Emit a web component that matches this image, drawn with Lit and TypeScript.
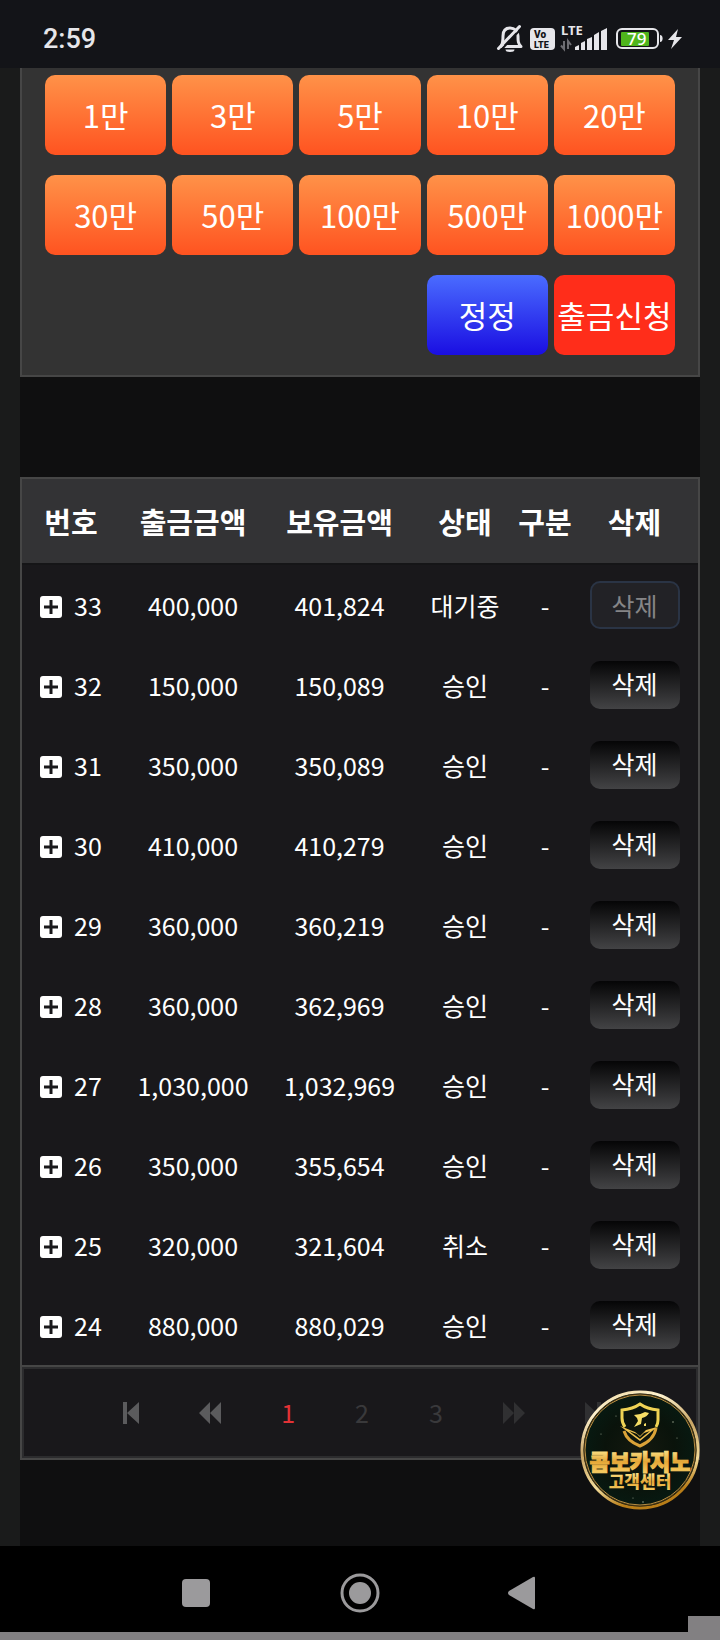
import {LitElement, html, svg, css} from 'lit'
import {customElement, property} from 'lit/decorators.js'
import {classMap} from 'lit/directives/class-map.js'

interface Withdrawal {
  no: number
  amount: string
  balance: string
  status: string
  pending?: boolean
}

const AMOUNTS = ['1만', '3만', '5만', '10만', '20만', '30만', '50만', '100만', '500만', '1000만']

const ROWS: Withdrawal[] = [
  {no: 33, amount: '400,000', balance: '401,824', status: '대기중', pending: true},
  {no: 32, amount: '150,000', balance: '150,089', status: '승인'},
  {no: 31, amount: '350,000', balance: '350,089', status: '승인'},
  {no: 30, amount: '410,000', balance: '410,279', status: '승인'},
  {no: 29, amount: '360,000', balance: '360,219', status: '승인'},
  {no: 28, amount: '360,000', balance: '362,969', status: '승인'},
  {no: 27, amount: '1,030,000', balance: '1,032,969', status: '승인'},
  {no: 26, amount: '350,000', balance: '355,654', status: '승인'},
  {no: 25, amount: '320,000', balance: '321,604', status: '취소'},
  {no: 24, amount: '880,000', balance: '880,029', status: '승인'},
]

@customElement('status-bar')
export class StatusBar extends LitElement {
  static styles = css`
    :host {
      display: flex;
      align-items: center;
      justify-content: space-between;
      height: 68px;
      padding: 10px 38px 0 43px;
      box-sizing: border-box;
      background: #131418;
      color: #e6e6ea;
      font-family: Roboto, "Noto Sans", sans-serif;
    }
    time {
      font-size: 27px;
      line-height: 32px;
      font-weight: 500;
    }
    .icons {
      display: flex;
      gap: 4px;
    }
    svg {
      display: block;
      height: 40px;
    }
    text {
      font-family: "Noto Sans", sans-serif;
      font-weight: 700;
    }
    .volte {
      font-family: Roboto, sans-serif;
      font-weight: 900;
    }
    .level {
      font-weight: 500;
    }
  `

  render() {
    return html`
      <time>2:59</time>
      <div class="icons">
        <svg width="30" viewBox="0 -5 30 40" fill="none" stroke="#e6e6ea" stroke-width="3">
          <path d="M5 22.500H25C22 19.500 22 17 22 12C22 7 18.500 4 14 4C9.500 4 7 7 7 12C7 17 7 19.500 5 22.500Z" stroke-linejoin="round"/>
          <path d="M5 26L26 4" stroke="#131418" stroke-width="2"/>
          <path d="M2.500 24.500L23.500 2.500" stroke-linecap="round"/>
          <path d="M9.500 25.500H18.500A4.500 2.500 0 0 1 9.500 25.500Z" fill="#e6e6ea" stroke="none"/>
        </svg>
        <svg width="26" viewBox="0 -5 26 40">
          <rect x="0" y="4" width="25" height="22" rx="4" fill="#e6e6ea"/>
          <text class="volte" x="4" y="14" font-size="10" fill="#131418">Vo</text>
          <text class="volte" x="4" y="24" font-size="9" fill="#131418">LTE</text>
        </svg>
        <svg width="50" viewBox="0 -5 50 40" fill="#e6e6ea">
          <text x="1" y="11" font-size="13">LTE</text>
          <path d="M15 26V23L19 21V26ZM21 26V19L25 17V26ZM27 26V15L32 13V26ZM34 26V11L39 8V26ZM41 26V7L47 4V26Z"/>
          <path d="M4 17V25L1 21.500M8 25V17L11 21" fill="none" stroke="#6d6d72" stroke-width="2"/>
        </svg>
        <svg width="50" viewBox="0 -5 50 40">
          <rect x="3" y="5" width="41" height="19" rx="5" fill="none" stroke="#e6e6ea" stroke-width="2"/>
          <rect x="7" y="8" width="28" height="14" rx="1" fill="#4fb51c"/>
          <path d="M46 11C49.500 11 49.500 18 46 18Z" fill="#e6e6ea"/>
          <text class="level" x="13" y="21" font-size="17" fill="#fff">79</text>
        </svg>
        <svg width="14" viewBox="0 -5 14 40">
          <path d="M10 5L0 16H6L3 25L14 13H8Z" fill="#e6e6ea"/>
        </svg>
      </div>
    `
  }
}

@customElement('amount-panel')
export class AmountPanel extends LitElement {
  static styles = css`
    :host {
      display: grid;
      grid-template-columns: repeat(5, 1fr);
      gap: 20px 6px;
      padding: 7px 23px 20px;
      background: #333;
      border: 2px solid #464646;
      border-top: 0;
    }
    button {
      height: 80px;
      padding: 0;
      border: 0;
      border-radius: 10px;
      background: linear-gradient(#ff9248, #ff5320);
      color: #fff;
      cursor: pointer;
      font: inherit;
      font-size: 31px;
      line-height: 40px;
      white-space: nowrap;
    }
    .reset {
      grid-column: 4;
      background: linear-gradient(#4a6cff, #1a0ee2);
    }
    .submit {
      background: #ff2d1a;
    }
  `

  render() {
    return html`
      ${AMOUNTS.map(amount => html`<button type="button">${amount}</button>`)}
      <button type="button" class="reset">정정</button>
      <button type="button" class="submit">출금신청</button>
    `
  }
}

@customElement('withdrawal-table')
export class WithdrawalTable extends LitElement {
  static styles = css`
    :host {
      display: block;
      border: 2px solid #464646;
      border-bottom: 0;
      background: #19181b;
    }
    table {
      width: 100%;
      table-layout: fixed;
      border-collapse: separate;
      border-spacing: 0;
      color: #fff;
      font-size: 25px;
      line-height: 36px;
      text-align: center;
    }
    .col-no { width: 98px; }
    .col-amount { width: 146px; }
    .col-balance { width: 147px; }
    .col-status { width: 104px; }
    .col-kind { width: 56px; }
    .col-delete { width: 125px; }
    th, td {
      padding: 0;
      white-space: nowrap;
    }
    th {
      height: 84px;
      background: #333335;
      border-bottom: 2px solid #151517;
      font-size: 29px;
      font-weight: 700;
    }
    td {
      height: 80px;
    }
    th:last-child, td:last-child {
      padding-right: 2px;
    }
    .no {
      display: flex;
      align-items: center;
      justify-content: center;
      gap: 12px;
    }
    button {
      padding: 0;
      border: 0;
      background: none;
      color: #fff;
      cursor: pointer;
      font: inherit;
    }
    .expand {
      padding-top: 3px;
    }
    svg {
      display: block;
    }
    .delete {
      width: 90px;
      height: 48px;
      padding-bottom: 4px;
      border-radius: 10px;
      background: linear-gradient(#050506, #434345);
      vertical-align: middle;
    }
    .delete.pending {
      padding-bottom: 0;
      border: 2px solid #2a3445;
      background: #222226;
      color: #858587;
      cursor: default;
    }
  `

  @property({attribute: false}) rows: Withdrawal[] = []

  _row(row: Withdrawal) {
    return html`
      <tr>
        <td>
          <div class="no">
            <button type="button" class="expand" aria-label="펼치기">
              <svg width="22" height="22" viewBox="0 0 22 22">
                <rect width="22" height="22" rx="3" fill="#fff"/>
                <path d="M11 4V18M4 11H18" stroke="#19181b" stroke-width="3"/>
              </svg>
            </button>
            <span>${row.no}</span>
          </div>
        </td>
        <td>${row.amount}</td>
        <td>${row.balance}</td>
        <td>${row.status}</td>
        <td>-</td>
        <td>
          <button type="button" class=${classMap({delete: true, pending: !!row.pending})} ?disabled=${row.pending}>삭제</button>
        </td>
      </tr>
    `
  }

  render() {
    return html`
      <table>
        <colgroup>
          <col class="col-no"><col class="col-amount"><col class="col-balance">
          <col class="col-status"><col class="col-kind"><col class="col-delete">
        </colgroup>
        <thead>
          <tr>
            <th>번호</th><th>출금금액</th><th>보유금액</th><th>상태</th><th>구분</th><th>삭제</th>
          </tr>
        </thead>
        <tbody>${this.rows.map(row => this._row(row))}</tbody>
      </table>
    `
  }
}

const first = svg`<path d="M0 0H4V22H0ZM4 11L16 0V22Z"/>`
const rewind = svg`<path d="M0 11L11 0V22ZM11 11L22 0V22Z"/>`
const forward = svg`<path d="M0 0L11 11L0 22ZM11 0L22 11L11 22Z"/>`
const last = svg`<path d="M0 0L12 11L0 22ZM12 0H16V22H12Z"/>`

@customElement('page-nav')
export class PageNav extends LitElement {
  static styles = css`
    :host {
      display: block;
      border: 2px solid #464646;
      background: #19181b;
    }
    nav {
      display: flex;
      align-items: center;
      justify-content: center;
      height: 87px;
      padding-left: 4px;
      border: 2px solid #2c2c2e;
    }
    button {
      padding: 0 30px;
      border: 0;
      background: none;
      color: #5b5b5d;
      cursor: pointer;
      font: inherit;
      font-size: 25px;
      line-height: 36px;
    }
    button:disabled {
      color: #303032;
    }
    .page {
      padding-bottom: 2px;
      color: #39393b;
    }
    .current {
      color: #e23236;
    }
    svg {
      display: block;
      fill: currentColor;
    }
  `

  _icon(label: string, width: number, shape: unknown, disabled = false) {
    return html`
      <button type="button" aria-label=${label} ?disabled=${disabled}>
        <svg width=${width} height="22" viewBox="0 0 ${width} 22">${shape}</svg>
      </button>
    `
  }

  render() {
    return html`
      <nav aria-label="페이지">
        ${this._icon('처음', 16, first)}
        ${this._icon('이전', 22, rewind)}
        ${[1, 2, 3].map(page => html`
          <button type="button" class=${classMap({page: true, current: page === 1})}>${page}</button>
        `)}
        ${this._icon('다음', 22, forward, true)}
        ${this._icon('마지막', 16, last, true)}
      </nav>
    `
  }
}

@customElement('support-badge')
export class SupportBadge extends LitElement {
  static styles = css`
    :host {
      display: block;
    }
    a, svg {
      display: block;
    }
    text {
      font-family: "Noto Sans CJK KR", sans-serif;
      font-weight: 900;
      text-anchor: middle;
    }
  `

  render() {
    return html`
      <a href="#support">
        <svg width="120" height="120" viewBox="0 0 120 120">
          <defs>
            <linearGradient id="ring" x1="0" y1="0" x2="0.300" y2="1">
              <stop offset="0" stop-color="#e9cf95"/>
              <stop offset="0.200" stop-color="#fff3cf"/>
              <stop offset="0.500" stop-color="#c9a565"/>
              <stop offset="0.800" stop-color="#f3dc9a"/>
              <stop offset="1" stop-color="#b87d18"/>
            </linearGradient>
            <linearGradient id="gold" x1="0" y1="0" x2="0" y2="1">
              <stop offset="0.200" stop-color="#fbe287"/>
              <stop offset="0.550" stop-color="#e5a737"/>
              <stop offset="0.900" stop-color="#f6cd63"/>
            </linearGradient>
            <radialGradient id="face">
              <stop offset="0" stop-color="#14190f"/>
              <stop offset="0.600" stop-color="#0a130b"/>
              <stop offset="1" stop-color="#071a12"/>
            </radialGradient>
          </defs>
          <circle cx="60" cy="60" r="58" fill="url(#face)" stroke="url(#ring)" stroke-width="3"/>
          <circle cx="60" cy="60" r="56" fill="none" stroke="#4a3210" stroke-width="1"/>
          <circle cx="60" cy="60" r="55" fill="none" stroke="#b98e42" stroke-width="1"/>
          <g fill="#8f9b86">
            <circle cx="36" cy="26" r="0.600"/><circle cx="93" cy="32" r="0.800"/>
            <circle cx="21" cy="44" r="0.600"/><circle cx="97" cy="48" r="0.600"/>
            <circle cx="53" cy="108" r="0.600"/><circle cx="63" cy="112" r="0.800"/>
          </g>
          <g fill="none" stroke="#efd354" stroke-width="3">
            <path d="M45 37Q42 33 42 28V20Q53 19 60 14Q67 19 78 20V30Q78 34 76 37"/>
            <path d="M44 41Q47 51 60 56Q74 50 76 38" stroke="#dba338"/>
          </g>
          <path d="M54 25Q60 25 65 22L69 23Q67 27 62 28L61 34L54 37L58 31L57 28ZM64 34L66 33V36H64Z" fill="#f5de66"/>
          <path d="M40 36L55 42L60 46L66 40L77 37L60 51Z" fill="#f0c14e"/>
          <path d="M49 41L57 44L60 47L64 43L70 41L60 49Z" fill="#0d150c"/>
          <text x="60" y="80" font-size="22" fill="url(#gold)" stroke="url(#gold)" stroke-width="1">콤보카지노</text>
          <text x="60" y="98" font-size="17" fill="url(#gold)">고객센터</text>
        </svg>
      </a>
    `
  }
}

@customElement('system-nav')
export class SystemNav extends LitElement {
  static styles = css`
    :host {
      display: block;
      position: relative;
      border-bottom: 8px solid #828082;
      background: #000;
    }
    nav {
      display: flex;
      justify-content: center;
      gap: 120px;
      padding: 25px 0 17px;
    }
    button {
      padding: 0;
      border: 0;
      background: none;
    }
    svg {
      display: block;
      fill: #9b9a9c;
    }
    .corner {
      position: absolute;
      right: 0;
      bottom: 0;
      width: 32px;
      height: 16px;
      background: #828082;
    }
  `

  render() {
    return html`
      <nav>
        <button type="button" aria-label="최근 앱">
          <svg width="44" height="44" viewBox="0 0 44 44"><rect x="8" y="8" width="28" height="28" rx="4"/></svg>
        </button>
        <button type="button" aria-label="홈">
          <svg width="44" height="44" viewBox="0 0 44 44">
            <circle cx="22" cy="22" r="18" fill="none" stroke="#9b9a9c" stroke-width="3"/>
            <circle cx="22" cy="22" r="11"/>
          </svg>
        </button>
        <button type="button" aria-label="뒤로">
          <svg width="44" height="44" viewBox="0 0 44 44"><path d="M7 20L31 6Q33 5 33 7V37Q33 39 31 38L7 24Q5 22 7 20Z"/></svg>
        </button>
      </nav>
      <div class="corner"></div>
    `
  }
}

@customElement('app-root')
export class AppRoot extends LitElement {
  static styles = css`
    :host {
      display: block;
      background: #1a1b1b;
      font-family: "Noto Sans CJK KR", sans-serif;
    }
    main {
      position: relative;
      margin: 0 20px;
      padding-bottom: 86px;
      background: #0f0f10;
    }
    withdrawal-table {
      margin-top: 100px;
    }
    support-badge {
      position: absolute;
      right: 0;
      bottom: 36px;
    }
  `

  render() {
    return html`
      <status-bar></status-bar>
      <main>
        <amount-panel></amount-panel>
        <withdrawal-table .rows=${ROWS}></withdrawal-table>
        <page-nav></page-nav>
        <support-badge></support-badge>
      </main>
      <system-nav></system-nav>
    `
  }
}
